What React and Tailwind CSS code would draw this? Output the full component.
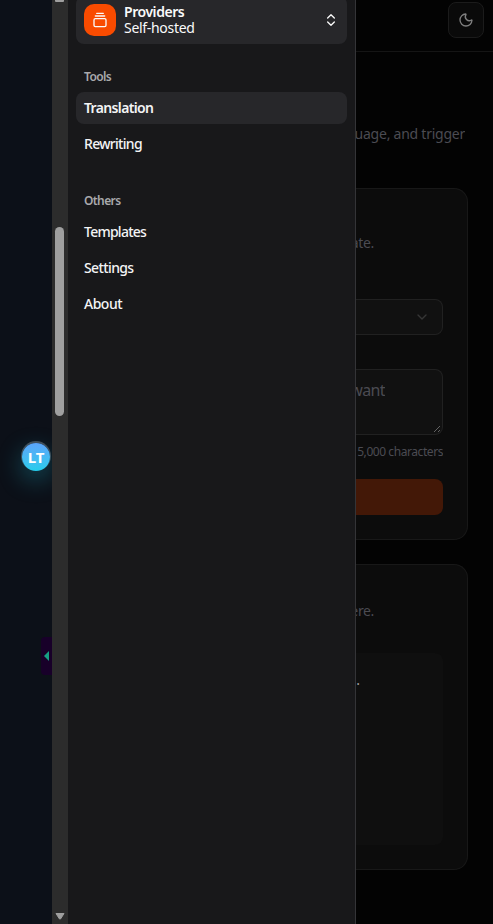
import { ChevronDown, ChevronsUpDown, GalleryVerticalEnd, Moon } from "lucide-react";

function NavItem({ label, active, spacing }) {
  return (
    <a
      className={`flex h-8 items-center rounded-lg px-2 pb-px text-[14px] leading-5 text-[#f4f4f5] ${spacing} ${
        active ? "bg-[#27272a] font-semibold" : "font-medium"
      }`}
    >
      {label}
    </a>
  );
}

function GroupLabel({ children }) {
  return (
    <div className="flex h-8 items-center px-2 pt-[2px] text-[12px] leading-4 font-semibold tracking-[-0.6px] text-[#a9a9ac]">
      {children}
    </div>
  );
}

function PageEdge() {
  return (
    <div className="flex w-[52px] shrink-0 flex-col items-end overflow-hidden bg-[#0c1018]">
      <div className="mt-[443px] mr-[2px] flex size-7 shrink-0 items-center justify-center rounded-full bg-gradient-to-b from-[#5ba4fa] to-[#22cdec] pb-px text-[15px] leading-5 font-bold text-white shadow-[0_8px_24px_rgba(34,205,236,0.35),0_-1px_0_1px_rgba(150,160,175,0.4)]">
        LT
      </div>
      <div className="mt-[166px] flex h-[38px] w-[11px] shrink-0 items-center justify-center rounded-l-[4px] bg-[#180029]">
        <svg width="5" height="10" viewBox="0 0 5 10">
          <path d="M5 0v10L0 5z" fill="#16a085" />
        </svg>
      </div>
    </div>
  );
}

function Scrollbar() {
  return (
    <div className="flex w-4 shrink-0 flex-col items-center bg-[#2c2c2c] pr-px">
      <div className="h-[2px] w-[9px] rounded-b-[1px] bg-[#9f9f9f]" />
      <div className="mt-[225px] h-[189px] w-[9px] rounded-full bg-[#9f9f9f]" />
      <svg className="mt-auto mb-1" width="10" height="7" viewBox="0 0 10 7">
        <path d="M1 .5h8L5.5 6h-1z" fill="#9f9f9f" stroke="#9f9f9f" strokeLinejoin="round" />
      </svg>
    </div>
  );
}

function Sidebar() {
  return (
    <aside className="flex w-72 shrink-0 flex-col overflow-hidden border-r border-[#343437] bg-[#18181a] px-2">
      <div className="-mt-1 flex h-12 shrink-0 items-center gap-2 rounded-lg bg-[#27272a] px-2 text-[#fafafa]">
        <div className="flex size-8 items-center justify-center rounded-[10px] bg-[#f94b00]">
          <GalleryVerticalEnd size={16} />
        </div>
        <div className="flex flex-1 flex-col text-[14px] leading-4">
          <span className="font-semibold tracking-[-0.45px]">Providers</span>
          <span className="tracking-[-0.3px]">Self-hosted</span>
        </div>
        <ChevronsUpDown size={16} />
      </div>
      <nav className="mt-4 flex flex-col">
        <GroupLabel>Tools</GroupLabel>
        <div className="flex flex-col gap-1">
          <NavItem label="Translation" active spacing="tracking-[-0.65px]" />
          <NavItem label="Rewriting" spacing="tracking-[-0.7px]" />
        </div>
      </nav>
      <nav className="mt-6 flex flex-col">
        <GroupLabel>Others</GroupLabel>
        <div className="flex flex-col gap-1">
          <NavItem label="Templates" spacing="tracking-[-0.75px]" />
          <NavItem label="Settings" spacing="tracking-[-0.62px]" />
          <NavItem label="About" spacing="tracking-[-0.5px]" />
        </div>
      </nav>
    </aside>
  );
}

function Content() {
  return (
    <main className="flex min-w-0 flex-1 flex-col overflow-hidden bg-[#030303] text-[#4b4b52]">
      <header className="flex h-[52px] shrink-0 items-start justify-end border-b border-[#151515] pt-[2px] pr-[9px]">
        <button className="flex size-9 items-center justify-center rounded-lg border border-[#1b1b1b] bg-[#0a0a0a] text-[#7f7f7f]">
          <Moon size={16} />
        </button>
      </header>
      <div className="mt-[72px] flex h-5 w-[109px] shrink-0 items-start justify-end overflow-hidden text-[14px] leading-5 tracking-[-0.24px] whitespace-nowrap">
        guage, and trigger
      </div>

      <section className="mt-[44px] flex h-[352px] w-28 shrink-0 flex-col rounded-r-[14px] border border-l-0 border-[#181818] bg-[#0c0c0c] pr-6">
        <div className="mt-[44px] flex h-5 w-[18px] items-start justify-end overflow-hidden text-[14px] leading-5 tracking-[-0.35px]">
          ate.
        </div>
        <div className="mt-[46px] flex h-9 items-center justify-end rounded-r-lg border border-l-0 border-[#212121] bg-[#111111] pr-3">
          <ChevronDown size={16} className="text-[#363636]" />
        </div>
        <div className="mt-[34px] flex h-[66px] items-start justify-between rounded-r-lg border border-l-0 border-[#212121] bg-[#111111]">
          <div className="mt-[8px] flex h-6 w-[29px] items-center justify-end overflow-hidden text-[16px] tracking-[-0.6px]">
            want
          </div>
          <svg className="self-end" width="9" height="9" viewBox="0 0 9 9" stroke="#777777" strokeWidth="0.8">
            <path d="M1 7L7 1M5 7L7 5" />
          </svg>
        </div>
        <div className="mt-[9px] flex h-4 items-center justify-end overflow-hidden text-[12px] tracking-[-0.43px] whitespace-nowrap">
          5,000 characters
        </div>
        <button className="mt-[19px] h-9 shrink-0 rounded-r-lg bg-[#431807]" />
      </section>

      <section className="mt-6 flex h-[306px] w-28 shrink-0 flex-col rounded-r-[14px] border border-l-0 border-[#181818] bg-[#0c0c0c] pr-6">
        <div className="mt-9 flex h-5 w-[18px] items-start justify-end overflow-hidden text-[14px] leading-5 tracking-[-0.35px]">
          ere.
        </div>
        <div className="mt-[32px] h-[192px] rounded-r-lg bg-[#0f0f0f] pt-[16px]">
          <div className="flex h-5 w-[4px] items-center justify-end overflow-hidden text-[14px] text-[#a0a0a0]">.</div>
        </div>
      </section>
    </main>
  );
}

export default function App() {
  return (
    <div className="flex h-[924px] w-[493px] overflow-hidden bg-black font-['Noto_Sans','Open_Sans',sans-serif]">
      <PageEdge />
      <Scrollbar />
      <Sidebar />
      <Content />
    </div>
  );
}
